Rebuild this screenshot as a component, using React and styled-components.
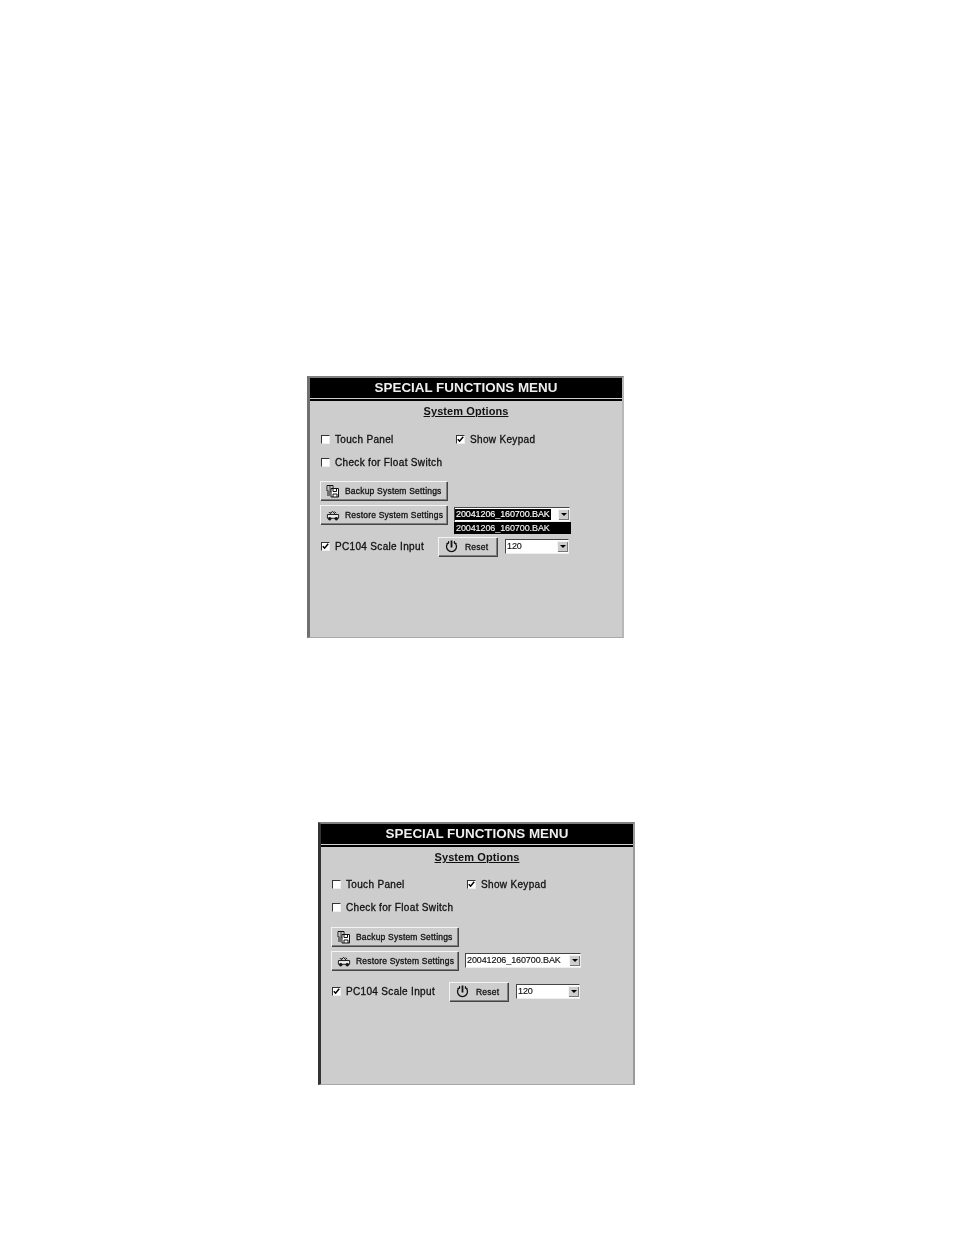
import React from "react";
import styled, { createGlobalStyle } from "styled-components";

const Global = createGlobalStyle`
  html, body { margin: 0; padding: 0; background: #fff; }
  body { font-family: "Liberation Sans", Arial, sans-serif; }
`;

const Page = styled.div`
  width: 954px;
  height: 1235px;
  padding-top: 376px;
  box-sizing: border-box;
  overflow: hidden;
  display: flex;
  flex-direction: column;
  align-items: flex-start;
  gap: 184px;
`;

const Window = styled.section`
  width: 317px;
  height: ${(p) => (p.$alt ? 263 : 262)}px;
  margin-left: ${(p) => (p.$alt ? 318 : 307)}px;
  box-sizing: border-box;
  background: #cdcdcd;
  border-top: 2px solid #808080;
  border-left: 3px solid ${(p) => (p.$alt ? "#333" : "#707070")};
  border-right: 2px solid ${(p) => (p.$alt ? "#9a9a9a" : "#b8b8b8")};
  border-bottom: 1px solid #a8a8a8;
  filter: blur(0.45px);
  display: flex;
  flex-direction: column;
`;

const TitleBar = styled.h1`
  margin: 0;
  height: 20px;
  flex: none;
  background: #000;
  color: #efefef;
  font-size: 13.4px;
  line-height: 20px;
  font-weight: 700;
  text-align: center;
`;

const TitleRule = styled.div`
  height: 2px;
  flex: none;
  margin-top: 1px;
  background: #000;
`;

const Body = styled.div`
  padding-left: 10px;
  display: flex;
  flex-direction: column;
  align-items: flex-start;
`;

const Heading = styled.h2`
  align-self: stretch;
  margin: 3px 0 0;
  padding-right: 10px;
  height: 14px;
  font-size: 11px;
  line-height: 14px;
  font-weight: 700;
  text-align: center;
  color: #111;
  letter-spacing: 0.08px;
  text-decoration: underline;
`;

const OptionRow = styled.div`
  display: flex;
  align-items: center;
  height: 14px;
  margin: ${(p) => p.$top}px 0 0 1px;
`;

const Option = styled.label`
  display: flex;
  align-items: center;
  gap: 5px;
  width: ${(p) => (p.$width ? `${p.$width}px` : "auto")};
  font-size: 10px;
  color: #111;
  letter-spacing: 0.33px;
  -webkit-text-stroke: 0.3px #111;
  white-space: nowrap;
`;

const CheckBox = styled.span`
  width: 9px;
  height: 9px;
  flex: none;
  box-sizing: border-box;
  background: #fff;
  border-top: 1.5px solid #333;
  border-left: 1.5px solid #333;
  border-right: 1px solid #eee;
  border-bottom: 1px solid #eee;
  display: flex;
  align-items: center;
  justify-content: center;
`;

const ButtonRow = styled.div`
  display: flex;
  align-items: flex-start;
  margin-top: ${(p) => p.$top}px;
`;

const Button = styled.button`
  width: ${(p) => p.$width}px;
  height: 19px;
  padding: 0 0 0 ${(p) => p.$pad || 6}px;
  flex: none;
  box-sizing: border-box;
  display: flex;
  align-items: center;
  gap: ${(p) => p.$gap || 5}px;
  background: #cdcdcd;
  border: 0;
  box-shadow: inset 1px 1px 0 #f4f4f4, inset -1px -1px 0 #808080, 1px 1px 0 #444;
  font-family: inherit;
  font-size: 8.5px;
  color: #111;
  letter-spacing: 0.2px;
  -webkit-text-stroke: 0.3px #111;
  white-space: nowrap;
  svg {
    flex: none;
    -webkit-text-stroke: 0;
  }
`;

const ComboWrap = styled.div`
  position: relative;
  flex: none;
  width: ${(p) => p.$width}px;
  height: 15px;
  margin: 2px 0 0 ${(p) => p.$left}px;
`;

const ComboBox = styled.div`
  height: 100%;
  box-sizing: border-box;
  display: flex;
  align-items: center;
  justify-content: space-between;
  padding: 0;
  background: #fff;
  border-top: 1px solid #444;
  border-left: 1px solid #444;
  border-right: 1px solid #eee;
  border-bottom: 1px solid #eee;
  font-size: 9px;
  color: #111;
  letter-spacing: -0.1px;
  -webkit-text-stroke: 0.15px currentColor;
`;

const ComboValue = styled.span`
  padding: 0 1px;
  line-height: 11px;
  background: ${(p) => (p.$selected ? "#000" : "transparent")};
  color: ${(p) => (p.$selected ? "#fff" : "#111")};
  white-space: nowrap;
`;

const ArrowButton = styled.span`
  width: 11px;
  height: 11px;
  flex: none;
  background: #cdcdcd;
  box-shadow: inset 1px 1px 0 #f4f4f4, inset -1px -1px 0 #777;
  display: flex;
  align-items: center;
  justify-content: center;
  &::after {
    content: "";
    border-left: 3px solid transparent;
    border-right: 3px solid transparent;
    border-top: 3px solid #000;
  }
`;

const DropList = styled.div`
  position: absolute;
  left: 0;
  right: -1px;
  top: 15px;
  height: 12px;
  padding-left: 2px;
  background: #000;
  color: #f2f2f2;
  font-size: 9px;
  line-height: 12px;
  letter-spacing: -0.1px;
  -webkit-text-stroke: 0.15px #f2f2f2;
  white-space: nowrap;
`;

const Check = () => (
  <svg width="7" height="7" viewBox="0 0 7 7">
    <path d="M0.8 3.2 L2.6 5.2 L6.2 0.8" fill="none" stroke="#000" strokeWidth="1.5" />
  </svg>
);

const BackupIcon = () => (
  <svg width="14" height="14" viewBox="0 0 14 14" fill="none" stroke="#111" strokeWidth="1">
    <path d="M1 1.5 H7 V7 H1 Z" fill="#fff" />
    <path d="M2.5 3 H5.5 M2.5 5 H5" />
    <path d="M5 4.5 H12.5 V13 H5 Z" fill="#fff" />
    <path d="M7 4.5 V7.5 H10.5 V4.5 M7 13 V10 H11 V13" />
    <path d="M1 9 H4 M1 11 H4" />
  </svg>
);

const RestoreIcon = () => (
  <svg width="14" height="12" viewBox="0 0 15 12" fill="none" stroke="#111" strokeWidth="1">
    <path d="M1.5 5.5 H13.5 V9.5 H1.5 Z" fill="#eee" />
    <path d="M4 5.5 L7 2 L10 5.5" />
    <path d="M3 3.5 H5 M9 2.5 L11 4" />
    <circle cx="4" cy="10" r="1.4" fill="#111" />
    <circle cx="11" cy="10" r="1.4" fill="#111" />
  </svg>
);

const ResetIcon = () => (
  <svg width="13" height="13" viewBox="0 0 13 13" fill="none" stroke="#111" strokeWidth="1.3">
    <path d="M4 2.2 A5 5 0 1 0 9 2.2" />
    <path d="M6.5 0.5 V7.5" strokeWidth="1.8" />
    <path d="M3.6 1 V3.4 H1.4" strokeWidth="1" />
    <path d="M9.4 1 V3.4 H11.6" strokeWidth="1" />
  </svg>
);

function Menu({ alt, open }) {
  return (
    <Window $alt={alt}>
      <TitleBar>SPECIAL FUNCTIONS MENU</TitleBar>
      <TitleRule />
      <Body>
        <Heading>System Options</Heading>
        <OptionRow $top={alt ? 13 : 14}>
          <Option $width={135}>
            <CheckBox />
            Touch Panel
          </Option>
          <Option>
            <CheckBox>
              <Check />
            </CheckBox>
            Show Keypad
          </Option>
        </OptionRow>
        <OptionRow $top={9}>
          <Option>
            <CheckBox />
            Check for Float Switch
          </Option>
        </OptionRow>
        <ButtonRow $top={alt ? 13 : 12}>
          <Button $width={127}>
            <BackupIcon />
            Backup System Settings
          </Button>
        </ButtonRow>
        <ButtonRow $top={5}>
          <Button $width={127}>
            <RestoreIcon />
            Restore System Settings
          </Button>
          <ComboWrap $width={116} $left={7}>
            <ComboBox>
              <ComboValue $selected={open}>20041206_160700.BAK</ComboValue>
              <ArrowButton />
            </ComboBox>
            {open && <DropList>20041206_160700.BAK</DropList>}
          </ComboWrap>
        </ButtonRow>
        <ButtonRow $top={alt ? 12 : 13}>
          <OptionRow $top={2}>
            <Option $width={117}>
              <CheckBox>
                <Check />
              </CheckBox>
              PC104 Scale Input
            </Option>
          </OptionRow>
          <Button $width={59} $pad={7} $gap={7}>
            <ResetIcon />
            Reset
          </Button>
          <ComboWrap $width={64} $left={8}>
            <ComboBox>
              <ComboValue>120</ComboValue>
              <ArrowButton />
            </ComboBox>
          </ComboWrap>
        </ButtonRow>
      </Body>
    </Window>
  );
}

export default function App() {
  return (
    <Page>
      <Global />
      <Menu open />
      <Menu alt />
    </Page>
  );
}
